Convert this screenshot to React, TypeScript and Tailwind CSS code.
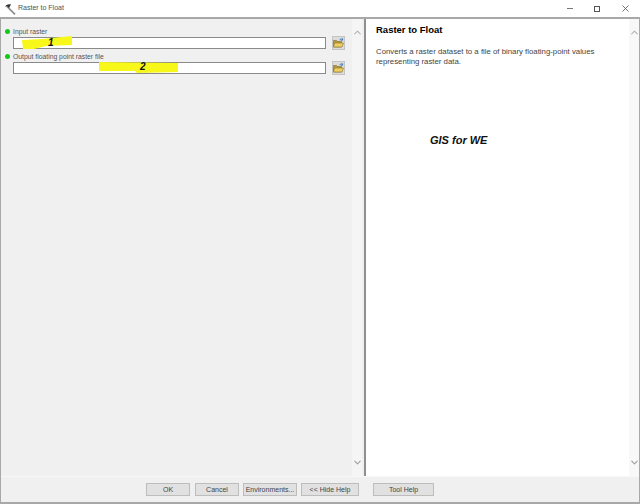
import { ChevronDown, ChevronUp } from "lucide-react";

const font = "font-['Liberation_Sans',Arial,sans-serif]";

function FolderButton() {
  return (
    <button className="w-[13px] h-[14px] ml-[6px] shrink-0 bg-[#dcdcdc] border border-[#c4c4c4] flex items-center justify-center">
      <svg width="11" height="10" viewBox="0 0 11 10">
        <path d="M0.5 2.5h3l1 1h4v5.5h-8z" fill="#b89a3a" stroke="#7a6a2a" strokeWidth="0.6" />
        <path d="M1.5 5h9l-1.5 4h-8.5z" fill="#f0cf62" stroke="#8a7430" strokeWidth="0.6" />
        <path d="M6.5 2.2c0.8-1.2 1.8-1.4 2.6-1.2M9.6 0.4v1.8h-1.8" fill="none" stroke="#2c6fb5" strokeWidth="0.9" />
      </svg>
    </button>
  );
}

function Param({ label, children }: { label: string; children: React.ReactNode }) {
  return (
    <div className="mb-[2px]">
      <div className="flex items-center h-[9px]">
        <span className="w-[5px] h-[5px] rounded-full bg-[#12c81e] ml-[4px] mr-[3px]" />
        <span className="text-[6.8px] leading-[9px] text-[#555]">{label}</span>
      </div>
      <div className="flex items-center ml-[12px] mr-[7px]">
        <div className="relative flex-1 h-[12px] bg-white border border-[#8a8a8a]">{children}</div>
        <FolderButton />
      </div>
    </div>
  );
}

function Scrollbar({ bg }: { bg: string }) {
  return (
    <div className={`w-[10px] shrink-0 flex flex-col justify-between items-center py-[8px] ${bg}`}>
      <ChevronUp size={11} strokeWidth={2.5} className="text-[#b4b4b4]" />
      <ChevronDown size={11} strokeWidth={2.5} className="text-[#a0a0a0]" />
    </div>
  );
}

function FootButton({ label, width }: { label: string; width: string }) {
  return (
    <button className={`${width} h-[13px] bg-[#e1e1e1] border border-[#bdbdbd] text-[7px] leading-[11px] text-[#444] text-center`}>
      {label}
    </button>
  );
}

export default function App() {
  return (
    <div className={`${font} w-[640px] h-[504px] bg-white flex flex-col overflow-hidden`}>
      {/* title bar */}
      <div className="h-[17px] shrink-0 flex items-center pl-[4px] pr-[11px] bg-white">
        <svg width="12" height="12" viewBox="0 0 12 12" className="mr-[1px]">
          <path d="M3.2 3.6 11 11.4" stroke="#8d8d8d" strokeWidth="1.7" />
          <path d="M1 4C2 1.8 4.4 0.8 7 1.6L5 5 3.6 3.8C2.8 3.4 1.8 3.6 1 4Z" fill="#333" />
        </svg>
        <span className="ml-[1px] text-[7px] text-[#3f5560]">Raster to Float</span>
        <div className="ml-auto flex items-center">
          <span className="w-[6px] h-px bg-[#777]" />
          <span className="ml-[21px] w-[6px] h-[6px] border border-[#555]" />
          <svg width="7" height="7" viewBox="0 0 7 7" className="ml-[22px]">
            <path d="M0.5 0.5 6.5 6.5M6.5 0.5 0.5 6.5" stroke="#555" strokeWidth="0.8" />
          </svg>
        </div>
      </div>

      {/* window body */}
      <div className="flex-1 min-h-0 flex flex-col bg-[#f0f0f0] border-t-2 border-b-2 border-x border-[#a8a8a8]">
        <div className="flex-1 min-h-0 flex">
          {/* parameters */}
          <div className="w-[351px] shrink-0 pt-[8px]">
            <Param label="Input raster">
              {/* marker scribble */}
              <svg width="52" height="15" viewBox="0 0 52 15" className="absolute left-[8px] -top-[2px]">
                <path d="M0 4 L20 3 L50 0 L50 9 L24 10 L12 13 L1 13 Z" fill="#f7f71a" />
              </svg>
              <span className="absolute left-[34px] -top-[1px] text-[10px] leading-[12px] italic font-bold text-[#111]">1</span>
            </Param>
            <Param label="Output floating point raster file">
              <svg width="80" height="12" viewBox="0 0 80 12" className="absolute left-[85px] -top-[1px]">
                <path d="M0 0 L79 1 L79 10 L38 11 L36 9 L0 9 Z" fill="#f7f71a" />
              </svg>
              <span className="absolute left-[126px] -top-[2px] text-[10px] leading-[12px] italic font-bold text-[#111]">2</span>
            </Param>
          </div>
          <Scrollbar bg="bg-[#f5f5f5]" />
          <div className="w-[2px] shrink-0 bg-[#f0f0f0]" />

          {/* help pane */}
          <div className="flex-1 min-w-0 flex bg-white border-l-2 border-[#8f8f8f]">
            <div className="flex-1 min-w-0 pl-[10px] pt-[4px]">
              <div className="text-[9.5px] leading-[13px] font-bold text-black">Raster to Float</div>
              <p className="mt-[11px] text-[7.8px] leading-[10px] text-[#444]">
                Converts a raster dataset to a file of binary floating-point values
                <br />
                representing raster data.
              </p>
              <div className="mt-[67px] ml-[54px] text-[11px] leading-[13px] font-bold italic text-[#111]">GIS for WE</div>
            </div>
            <Scrollbar bg="bg-[#f8f8f8]" />
          </div>
        </div>

        {/* footer buttons */}
        <div className="h-[26px] shrink-0 flex items-center pl-[145px] border-t border-[#f8f8f8]">
          <FootButton label="OK" width="w-[44px]" />
          <FootButton label="Cancel" width="w-[44px] ml-[5px]" />
          <FootButton label="Environments..." width="w-[54px] ml-[4px]" />
          <FootButton label="<< Hide Help" width="w-[58px] ml-[4px]" />
          <FootButton label="Tool Help" width="w-[61px] ml-[14px]" />
        </div>
      </div>
    </div>
  );
}
